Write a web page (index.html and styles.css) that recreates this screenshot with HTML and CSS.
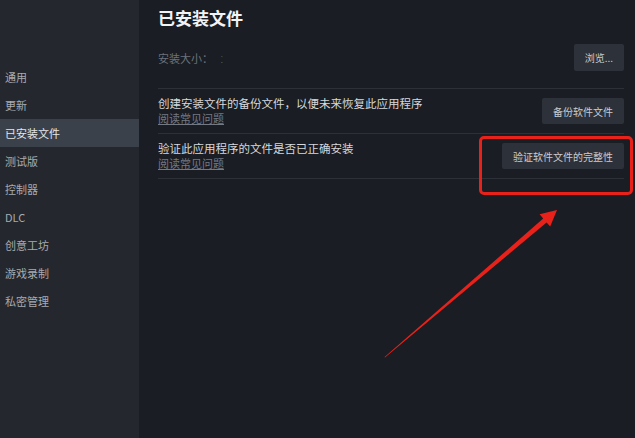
FILE: index.html
```html
<!DOCTYPE html>
<html lang="zh-CN">

<head>
    <meta charset="UTF-8">
    <title>已安装文件</title>
    <link rel="stylesheet" href="styles.css">
</head>

<body>
    <div class="page">
        <!-- menu laterale -->
        <nav class="sidebar">
            <div class="nav-item">通用</div>
            <div class="nav-item">更新</div>
            <div class="nav-item active">已安装文件</div>
            <div class="nav-item">测试版</div>
            <div class="nav-item">控制器</div>
            <div class="nav-item">DLC</div>
            <div class="nav-item">创意工坊</div>
            <div class="nav-item">游戏录制</div>
            <div class="nav-item">私密管理</div>
        </nav>

        <!-- contenuto -->
        <main class="content">
            <h1 class="title">已安装文件</h1>

            <div class="row row-size">
                <div class="size-label">安装大小：<span class="size-dot">⁚</span></div>
                <button class="btn">浏览...</button>
            </div>

            <div class="row">
                <div class="row-text">
                    <div class="row-desc">创建安装文件的备份文件，以便未来恢复此应用程序</div>
                    <a class="row-link">阅读常见问题</a>
                </div>
                <button class="btn">备份软件文件</button>
            </div>

            <div class="row">
                <div class="row-text">
                    <div class="row-desc">验证此应用程序的文件是否已正确安装</div>
                    <a class="row-link">阅读常见问题</a>
                </div>
                <button class="btn">验证软件文件的完整性</button>
            </div>
        </main>

        <!-- annotazione rossa sopra lo screenshot -->
        <div class="highlight"></div>
        <svg class="arrow" width="635" height="438" viewBox="0 0 635 438">
            <polygon fill="#e8211a"
                points="385,357.5 546.6,222.6 550.2,226.6 557,210 539.6,214.3 543.2,218.4 384.6,357" />
        </svg>
    </div>
</body>

</html>
```

FILE: styles.css
```css
/* pagina */
body {
    margin: 0;
    padding: 0;
    font-family: "Noto Sans CJK SC", "Noto Sans", sans-serif;
    background: #1a1d23;
}

.page {
    position: relative;
    display: flex;
    width: 635px;
    height: 438px;
    overflow: hidden;
}

/* menu laterale */
.sidebar {
    width: 139px;
    flex-shrink: 0;
    padding-top: 63px;
    background: #24272d;
    box-sizing: border-box;
}

.nav-item {
    height: 28px;
    line-height: 28px;
    padding-left: 5px;
    font-size: 11px;
    color: #a7abb1;
}

.nav-item.active {
    background: #3b414b;
    color: #e4e6e8;
}

/* contenuto */
.content {
    flex: 1;
    padding: 7px 11px 0 19px;
}

.title {
    margin: 0;
    font-size: 17px;
    line-height: 22px;
    font-weight: bold;
    color: #f2f3f4;
}

.row {
    display: flex;
    align-items: center;
    justify-content: space-between;
    padding: 7px 0;
    border-bottom: 1px solid #2c3038;
}

.row-size {
    margin-top: 6px;
    padding: 9px 0 17px;
    align-items: center;
}

.size-label {
    font-size: 11px;
    color: #6c727b;
}

.size-dot {
    margin-left: 8px;
    font-size: 8px;
    color: #3f6d90;
}

.row-text {
    display: flex;
    flex-direction: column;
}

.row-desc {
    font-size: 11.5px;
    line-height: 15px;
    color: #d6d8db;
}

.row-link {
    align-self: flex-start;
    font-size: 11px;
    line-height: 15px;
    color: #737982;
    text-decoration: underline;
}

/* pulsanti */
.btn {
    height: 26px;
    padding: 0 11px;
    border: none;
    border-radius: 2px;
    background: #2d3139;
    color: #c9ccd0;
    font-family: inherit;
    font-size: 10px;
}

.row-size .btn {
    height: 27px;
}

/* riquadro rosso */
.highlight {
    position: absolute;
    left: 479px;
    top: 136px;
    width: 148px;
    height: 53px;
    border: 3px solid #e8211a;
    border-radius: 5px;
}

.arrow {
    position: absolute;
    left: 0;
    top: 0;
}
```
